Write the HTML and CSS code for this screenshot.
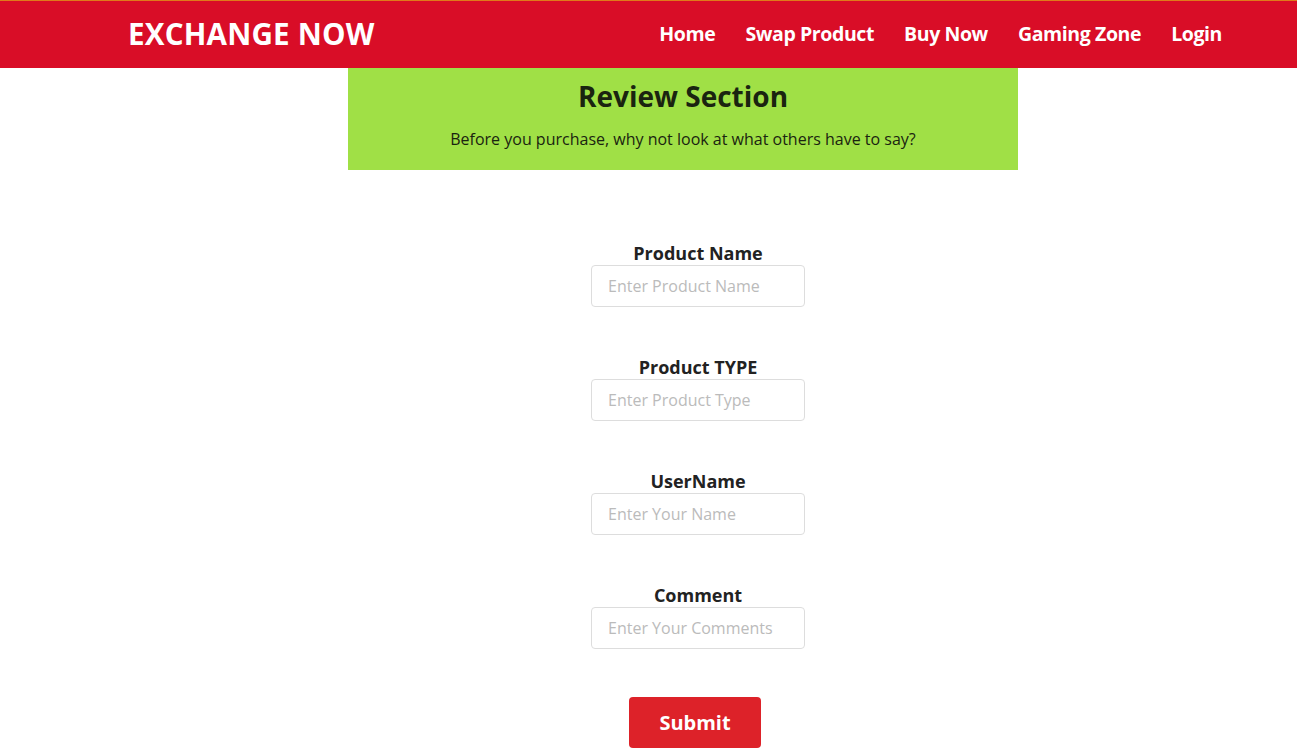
FILE: index.html
```html
<!DOCTYPE html>
<html>
<head>
<meta charset="utf-8">
<link rel="stylesheet" href="styles.css">
</head>
<body>
<header class="topbar">
  <div class="logo">EXCHANGE NOW</div>
  <nav class="nav">
    <a href="#">Home</a>
    <a href="#">Swap Product</a>
    <a href="#">Buy Now</a>
    <a href="#">Gaming Zone</a>
    <a href="#">Login</a>
  </nav>
</header>
<section class="hero">
  <h1>Review Section</h1>
  <p>Before you purchase, why not look at what others have to say?</p>
</section>
<form class="review-form">
  <div class="field">
    <label>Product Name</label>
    <input type="text" placeholder="Enter Product Name">
  </div>
  <div class="field">
    <label>Product TYPE</label>
    <input type="text" placeholder="Enter Product Type">
  </div>
  <div class="field">
    <label>UserName</label>
    <input type="text" placeholder="Enter Your Name">
  </div>
  <div class="field">
    <label>Comment</label>
    <input type="text" placeholder="Enter Your Comments">
  </div>
  <button type="button" class="submit">Submit</button>
</form>
</body>
</html>
```
FILE: styles.css
```css
* { box-sizing: border-box; }
body {
  margin: 0;
  font-family: "Open Sans", "Noto Sans", sans-serif;
  background: #fff;
  color: #222;
}
.topbar {
  height: 68px;
  background: #d90d27;
  border-top: 1px solid #e07a1a;
  display: flex;
  align-items: center;
  justify-content: space-between;
  padding: 0 75px 0 128px;
}
.logo {
  color: #fff;
  font-weight: 700;
  font-size: 29.6px;
  letter-spacing: 0.2px;
  margin-top: -2px;
}
.nav {
  display: flex;
  gap: 30px;
  margin-top: -2px;
}
.nav a {
  color: #fff;
  text-decoration: none;
  font-weight: 700;
  font-size: 19.5px;
  letter-spacing: -0.4px;
}
.hero {
  width: 670px;
  margin-left: 348px;
  background: #a0e046;
  height: 102px;
  text-align: center;
  padding-top: 9px;
}
.hero h1 {
  margin: 0;
  font-size: 28px;
  font-weight: 700;
  color: #1a2410;
  line-height: 38px;
}
.hero p {
  margin: 13px 0 0;
  font-size: 16px;
  color: #1a2410;
  line-height: 22px;
}
.review-form {
  margin-left: 591px;
  width: 214px;
  padding-top: 72px;
  display: flex;
  flex-direction: column;
}
.field {
  display: flex;
  flex-direction: column;
  align-items: center;
  margin-bottom: 49px;
}
.field:last-of-type { margin-bottom: 48px; }
.field label {
  font-weight: 700;
  font-size: 18px;
  line-height: 23px;
  color: #222;
}
.field input {
  width: 214px;
  height: 42px;
  border: 1px solid #ddd;
  border-radius: 4px;
  padding: 0 16px;
  font-family: "Open Sans", sans-serif;
  font-size: 16px;
  color: #333;
}
.field input::placeholder { color: #bbb; }
.submit {
  margin-left: 38px;
  width: 132px;
  height: 51px;
  background: #dd2229;
  color: #fff;
  border: none;
  border-radius: 4px;
  font-family: "Open Sans", sans-serif;
  font-weight: 700;
  font-size: 20px;
}
```
